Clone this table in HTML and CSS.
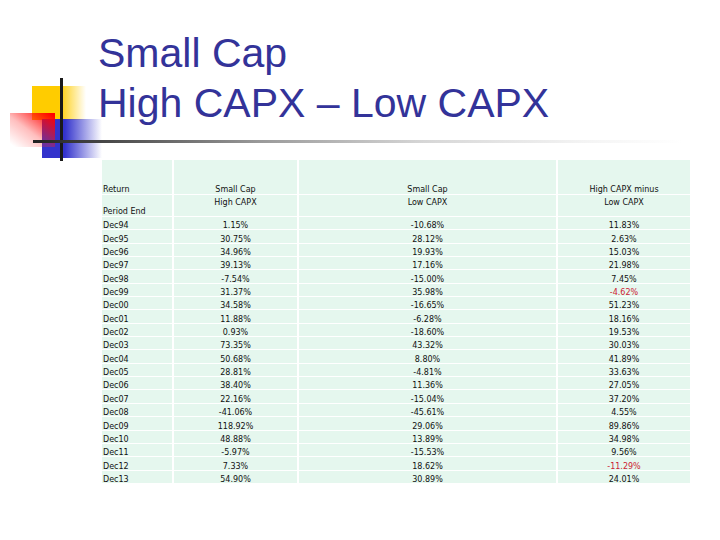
FILE: index.html
```html
<!DOCTYPE html>
<html lang="en">
<head>
<meta charset="utf-8">
<title>Small Cap High CAPX – Low CAPX</title>
<link rel="stylesheet" href="styles.css">
</head>
<body>
<div class="slide">
  <div class="deco" aria-hidden="true">
    <div class="sq-yellow"></div>
    <div class="sq-blue"></div>
    <div class="sq-red"></div>
    <div class="line-v"></div>
    <div class="line-h"></div>
  </div>
  <h1 class="title">Small Cap<br>High CAPX – Low CAPX</h1>
  <table class="data">
    <colgroup>
      <col class="c1"><col class="c2"><col class="c3"><col class="c4">
    </colgroup>
    <tbody>
      <tr class="h1row">
        <td class="lbl">Return</td>
        <td>Small Cap</td>
        <td>Small Cap</td>
        <td>High CAPX minus</td>
      </tr>
      <tr class="h2row">
        <td class="lbl">Period End</td>
        <td>High CAPX</td>
        <td>Low CAPX</td>
        <td>Low CAPX</td>
      </tr>
      <tr><td class="lbl">Dec94</td><td>1.15%</td><td>-10.68%</td><td>11.83%</td></tr>
      <tr><td class="lbl">Dec95</td><td>30.75%</td><td>28.12%</td><td>2.63%</td></tr>
      <tr><td class="lbl">Dec96</td><td>34.96%</td><td>19.93%</td><td>15.03%</td></tr>
      <tr><td class="lbl">Dec97</td><td>39.13%</td><td>17.16%</td><td>21.98%</td></tr>
      <tr><td class="lbl">Dec98</td><td>-7.54%</td><td>-15.00%</td><td>7.45%</td></tr>
      <tr><td class="lbl">Dec99</td><td>31.37%</td><td>35.98%</td><td class="neg">-4.62%</td></tr>
      <tr><td class="lbl">Dec00</td><td>34.58%</td><td>-16.65%</td><td>51.23%</td></tr>
      <tr><td class="lbl">Dec01</td><td>11.88%</td><td>-6.28%</td><td>18.16%</td></tr>
      <tr><td class="lbl">Dec02</td><td>0.93%</td><td>-18.60%</td><td>19.53%</td></tr>
      <tr><td class="lbl">Dec03</td><td>73.35%</td><td>43.32%</td><td>30.03%</td></tr>
      <tr><td class="lbl">Dec04</td><td>50.68%</td><td>8.80%</td><td>41.89%</td></tr>
      <tr><td class="lbl">Dec05</td><td>28.81%</td><td>-4.81%</td><td>33.63%</td></tr>
      <tr><td class="lbl">Dec06</td><td>38.40%</td><td>11.36%</td><td>27.05%</td></tr>
      <tr><td class="lbl">Dec07</td><td>22.16%</td><td>-15.04%</td><td>37.20%</td></tr>
      <tr><td class="lbl">Dec08</td><td>-41.06%</td><td>-45.61%</td><td>4.55%</td></tr>
      <tr><td class="lbl">Dec09</td><td>118.92%</td><td>29.06%</td><td>89.86%</td></tr>
      <tr><td class="lbl">Dec10</td><td>48.88%</td><td>13.89%</td><td>34.98%</td></tr>
      <tr><td class="lbl">Dec11</td><td>-5.97%</td><td>-15.53%</td><td>9.56%</td></tr>
      <tr><td class="lbl">Dec12</td><td>7.33%</td><td>18.62%</td><td class="neg">-11.29%</td></tr>
      <tr><td class="lbl">Dec13</td><td>54.90%</td><td>30.89%</td><td>24.01%</td></tr>
    </tbody>
  </table>
</div>
</body>
</html>
```

FILE: styles.css
```css
html, body {
  margin: 0;
  padding: 0;
  background: #ffffff;
}

.slide {
  position: relative;
  width: 720px;
  height: 540px;
  overflow: hidden;
  background: #ffffff;
}

/* decorative slide graphic */
.deco {
  position: absolute;
  left: 0;
  top: 0;
  width: 720px;
  height: 170px;
  pointer-events: none;
}

.sq-yellow {
  position: absolute;
  left: 32px;
  top: 86px;
  width: 54px;
  height: 34px;
  background: linear-gradient(to right, #ffcc00 0%, #ffcc00 50%, rgba(255, 204, 0, 0) 100%);
}

.sq-blue {
  position: absolute;
  left: 42px;
  top: 119px;
  width: 60px;
  height: 39px;
  background: linear-gradient(to right, #3333cc 0%, #3333cc 38%, rgba(51, 51, 204, 0) 100%);
}

.sq-red {
  position: absolute;
  left: 10px;
  top: 113px;
  width: 45px;
  height: 34px;
  background: linear-gradient(to top right, rgba(255, 60, 60, 0) 5%, rgba(255, 40, 40, 0.3) 45%, #ff0000 95%);
}

.line-v {
  position: absolute;
  left: 60px;
  top: 78px;
  width: 3px;
  height: 83px;
  background: #1a1a1a;
}

.line-h {
  position: absolute;
  left: 33px;
  top: 140px;
  width: 650px;
  height: 3px;
  background: linear-gradient(to right, #222222 0%, #555555 15%, #9a9a9a 35%, #d6d6d6 60%, #f4f4f4 85%, rgba(255, 255, 255, 0) 100%);
}

/* title */
.title {
  position: relative;
  margin: 0;
  padding: 28px 0 0 98px;
  font-family: "Liberation Sans", Arial, sans-serif;
  font-weight: normal;
  font-size: 41px;
  line-height: 50px;
  color: #333399;
}

/* table */
.data {
  position: relative;
  margin: 31px 0 0 100px;
  width: 592px;
  table-layout: fixed;
  border-collapse: separate;
  border-spacing: 2px 1px;
  font-family: "DejaVu Sans", Verdana, sans-serif;
  font-size: 8px;
  color: #111111;
}

.c1 { width: 70px; }
.c2 { width: 123px; }
.c3 { width: 257px; }
.c4 { width: 132px; }

.data td {
  background: #e5f7ee;
  padding: 0;
  text-align: center;
  vertical-align: bottom;
  line-height: 6px;
  white-space: nowrap;
}

.data tr {
  height: 12.35px;
}

.data td.lbl {
  text-align: left;
  padding-left: 1px;
}

.data tr.h1row {
  height: 34px;
}

.data tr.h1row td {
  vertical-align: bottom;
  line-height: 9px;
  padding: 0;
}

.data tr.h1row td.lbl {
  padding-left: 1px;
}

.data tr.h2row {
  height: 21px;
}

.data tr.h2row td {
  vertical-align: top;
  line-height: 10px;
  padding: 3px 0 0 0;
}

.data tr.h2row td.lbl {
  vertical-align: bottom;
  line-height: 8px;
  padding: 0 0 0 1px;
}

.data td.neg {
  color: #cc2233;
}
```
